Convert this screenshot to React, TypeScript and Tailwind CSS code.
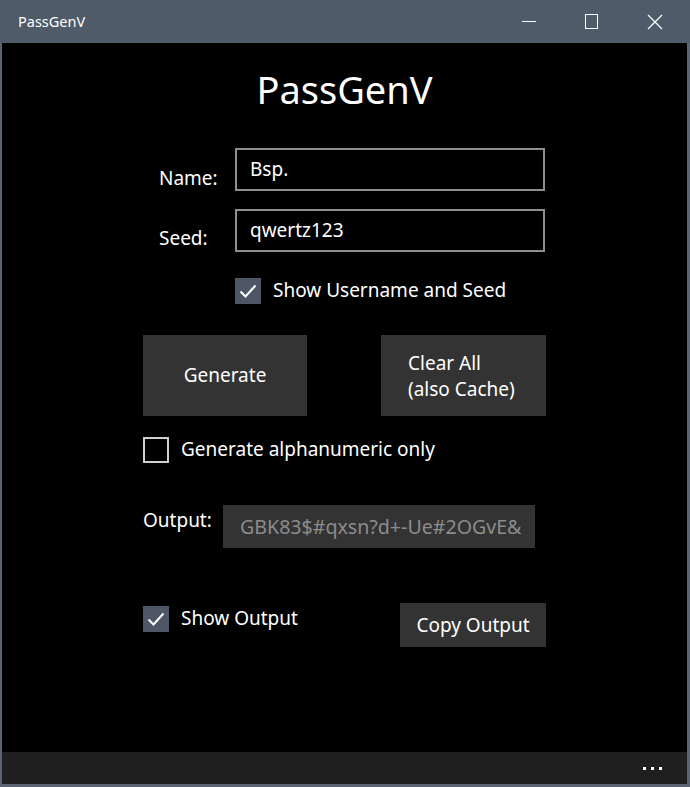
import React from "react";

const font = { fontFamily: '"Noto Sans", "Open Sans", sans-serif' };

function Check({ checked }: { checked: boolean }) {
  if (checked) {
    return (
      <div className="w-[26px] h-[26px] bg-[#4d5766] flex items-center justify-center shrink-0">
        <svg width="26" height="26" viewBox="0 0 26 26">
          <path d="M5.5 13.5 L10.5 18.5 L20.5 7.5" fill="none" stroke="#ffffff" strokeWidth="2" />
        </svg>
      </div>
    );
  }
  return <div className="w-[26px] h-[26px] border-2 border-[#d0d0d0] shrink-0" />;
}

export default function App() {
  return (
    <div className="w-[690px] h-[787px] bg-[#5a6472] flex flex-col text-white" style={font}>
      {/* title bar */}
      <div className="h-[43px] bg-[#4f5b69] flex items-center shrink-0">
        <span className="ml-[18px] text-[14.5px] text-white">PassGenV</span>
        <div className="ml-auto flex items-center h-full pr-[4px]">
          <div className="w-[63px] h-full flex items-center justify-center">
            <div className="w-[14px] h-[1px] bg-white" />
          </div>
          <div className="w-[63px] h-full flex items-center justify-center">
            <div className="w-[13px] h-[15px] border border-white" />
          </div>
          <div className="w-[63px] h-full flex items-center justify-center">
            <svg width="16" height="16" viewBox="0 0 16 16">
              <path d="M1 1 L15 15 M15 1 L1 15" stroke="#ffffff" strokeWidth="1.2" fill="none" />
            </svg>
          </div>
        </div>
      </div>
      {/* content */}
      <div className="flex-1 ml-[2px] mr-[3px] bg-black flex flex-col items-center">
        <div className="mt-[21px] text-[38px] leading-[50px]">PassGenV</div>
        <div className="w-[403px] flex flex-col">
          {/* Name */}
          <div className="mt-[34px] flex items-center h-[43px]">
            <div className="w-[92px] pl-[16px] text-[19px] pt-[18px]">Name:</div>
            <div className="w-[310px] h-[43px] border-2 border-[#8f8f8f] flex items-center pl-[13px] text-[19px]">Bsp.</div>
          </div>
          <div className="mt-[18px] flex items-center h-[43px]">
            <div className="w-[92px] pl-[16px] text-[19px] pt-[16px]">Seed:</div>
            <div className="w-[310px] h-[43px] border-2 border-[#8f8f8f] flex items-center pl-[13px] text-[19px]">qwertz123</div>
          </div>
          <div className="mt-[26px] flex items-center ml-[92px] gap-[12px] h-[26px]">
            <Check checked />
            <span className="text-[19px] -mt-[2px]">Show Username and Seed</span>
          </div>
          <div className="mt-[31px] flex justify-between">
            <div className="w-[164px] h-[81px] bg-[#333333] flex items-center justify-center text-[19px]">Generate</div>
            <div className="w-[165px] h-[81px] bg-[#333333] flex flex-col justify-center pl-[27px] text-[19px] leading-[26px]">
              <span>Clear All</span>
              <span>(also Cache)</span>
            </div>
          </div>
          <div className="mt-[21px] flex items-center gap-[12px] h-[26px]">
            <Check checked={false} />
            <span className="text-[19px] -mt-[2px]">Generate alphanumeric only</span>
          </div>
          <div className="mt-[42px] flex items-start">
            <div className="w-[80px] text-[19px] leading-[26px] pt-[2px]">Output:</div>
            <div className="w-[312px] h-[43px] bg-[#333333] flex items-center pl-[17px] text-[19.6px] text-[#8c8c8c] overflow-hidden whitespace-nowrap">GBK83$#qxsn?d+-Ue#2OGvE&amp;</div>
          </div>
          <div className="mt-[55px] flex items-start justify-between">
            <div className="flex items-center gap-[12px] h-[26px] mt-[3px]">
              <Check checked />
              <span className="text-[19px] -mt-[2px]">Show Output</span>
            </div>
            <div className="w-[146px] h-[44px] bg-[#333333] flex items-center justify-center text-[19px]">Copy Output</div>
          </div>
        </div>
      </div>
      {/* bottom bar */}
      <div className="h-[32px] ml-[2px] mr-[3px] bg-[#1f1f1f] flex items-center justify-end pr-[25px] gap-[5px] shrink-0">
        <div className="w-[3px] h-[3px] bg-white" />
        <div className="w-[3px] h-[3px] bg-white" />
        <div className="w-[3px] h-[3px] bg-white" />
      </div>
      <div className="h-[3px] shrink-0" />
    </div>
  );
}
